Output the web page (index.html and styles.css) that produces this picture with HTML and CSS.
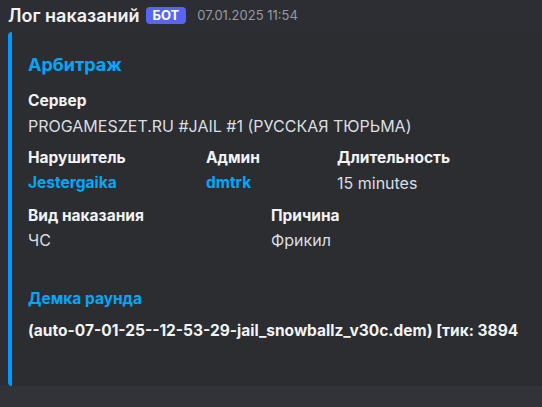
FILE: index.html
```html
<!DOCTYPE html>
<html>

<head>
    <title>Лог наказаний</title>
    <link rel="stylesheet" href="styles.css">
</head>

<body>
    <div class="message">
        <div class="header">
            <span class="username">Лог наказаний</span>
            <span class="bot-tag">БОТ</span>
            <span class="timestamp">07.01.2025 11:54</span>
        </div>
        <div class="embed">
            <div class="embed-title">Арбитраж</div>

            <div class="field">
                <div class="field-name">Сервер</div>
                <div class="field-value">PROGAMESZET.RU #JAIL #1 (РУССКАЯ ТЮРЬМА)</div>
            </div>

            <div class="field-row row-three">
                <div class="field">
                    <div class="field-name">Нарушитель</div>
                    <div class="field-value link">Jestergaika</div>
                </div>
                <div class="field">
                    <div class="field-name">Админ</div>
                    <div class="field-value link">dmtrk</div>
                </div>
                <div class="field">
                    <div class="field-name">Длительность</div>
                    <div class="field-value">15 minutes</div>
                </div>
            </div>

            <div class="field-row row-two">
                <div class="field">
                    <div class="field-name">Вид наказания</div>
                    <div class="field-value">ЧС</div>
                </div>
                <div class="field">
                    <div class="field-name">Причина</div>
                    <div class="field-value">Фрикил</div>
                </div>
            </div>

            <div class="field demo">
                <div class="field-name link">Демка раунда</div>
                <div class="field-value strong">(auto-07-01-25--12-53-29-jail_snowballz_v30c.dem) [тик: 3894</div>
            </div>
        </div>
    </div>
</body>

</html>
```

FILE: styles.css
```css
body {
    font-family: Inter, "Noto Sans", Arial, sans-serif;
    background-color: #313338;
    color: #dbdee1;
    margin: 0;
    padding: 0;
    overflow: hidden;
}

.message {
    background-color: #2c2e33;
    padding: 4px 0 0 8px;
}

/* Header with bot name */
.header {
    display: flex;
    align-items: center;
    height: 22px;
}

.username {
    font-size: 18px;
    font-weight: 600;
    color: #f2f3f5;
}

.bot-tag {
    background-color: #5865f2;
    color: #fff;
    font-size: 13px;
    font-weight: 700;
    border-radius: 4px;
    padding: 0 7px;
    height: 17px;
    line-height: 17px;
    margin-left: 6px;
}

.timestamp {
    font-size: 13px;
    color: #949ba4;
    margin-left: 11px;
}

/* Embed */
.embed {
    margin-top: 6px;
    width: 560px;
    background-color: #2b2d31;
    border-left: 4px solid #0099ff;
    border-radius: 4px;
    padding: 21px 16px 44px 16px;
}

.embed-title {
    font-size: 18px;
    font-weight: 700;
    color: #00a8fc;
    line-height: 24px;
    margin-bottom: 14px;
}

.field-name {
    font-size: 15.5px;
    font-weight: 700;
    color: #f2f3f5;
    line-height: 20px;
}

.field-value {
    font-size: 16px;
    line-height: 22px;
    margin-top: 4px;
}

.field-row {
    display: grid;
    margin-top: 13px;
}

.field + .field-row {
    margin-top: 11px;
}

.row-three {
    grid-template-columns: 178px 131px auto;
}

.row-two {
    grid-template-columns: 243px auto;
    margin-top: 12px;
}

.row-two .field-value {
    margin-top: 3px;
}

.link {
    color: #00a8fc;
    font-weight: 700;
    font-size: 15.5px;
}

.strong {
    font-weight: 700;
    font-size: 15.5px;
    color: #f2f3f5;
}

.demo {
    margin-top: 38px;
}

.demo .field-value {
    margin-top: 11px;
}
```
